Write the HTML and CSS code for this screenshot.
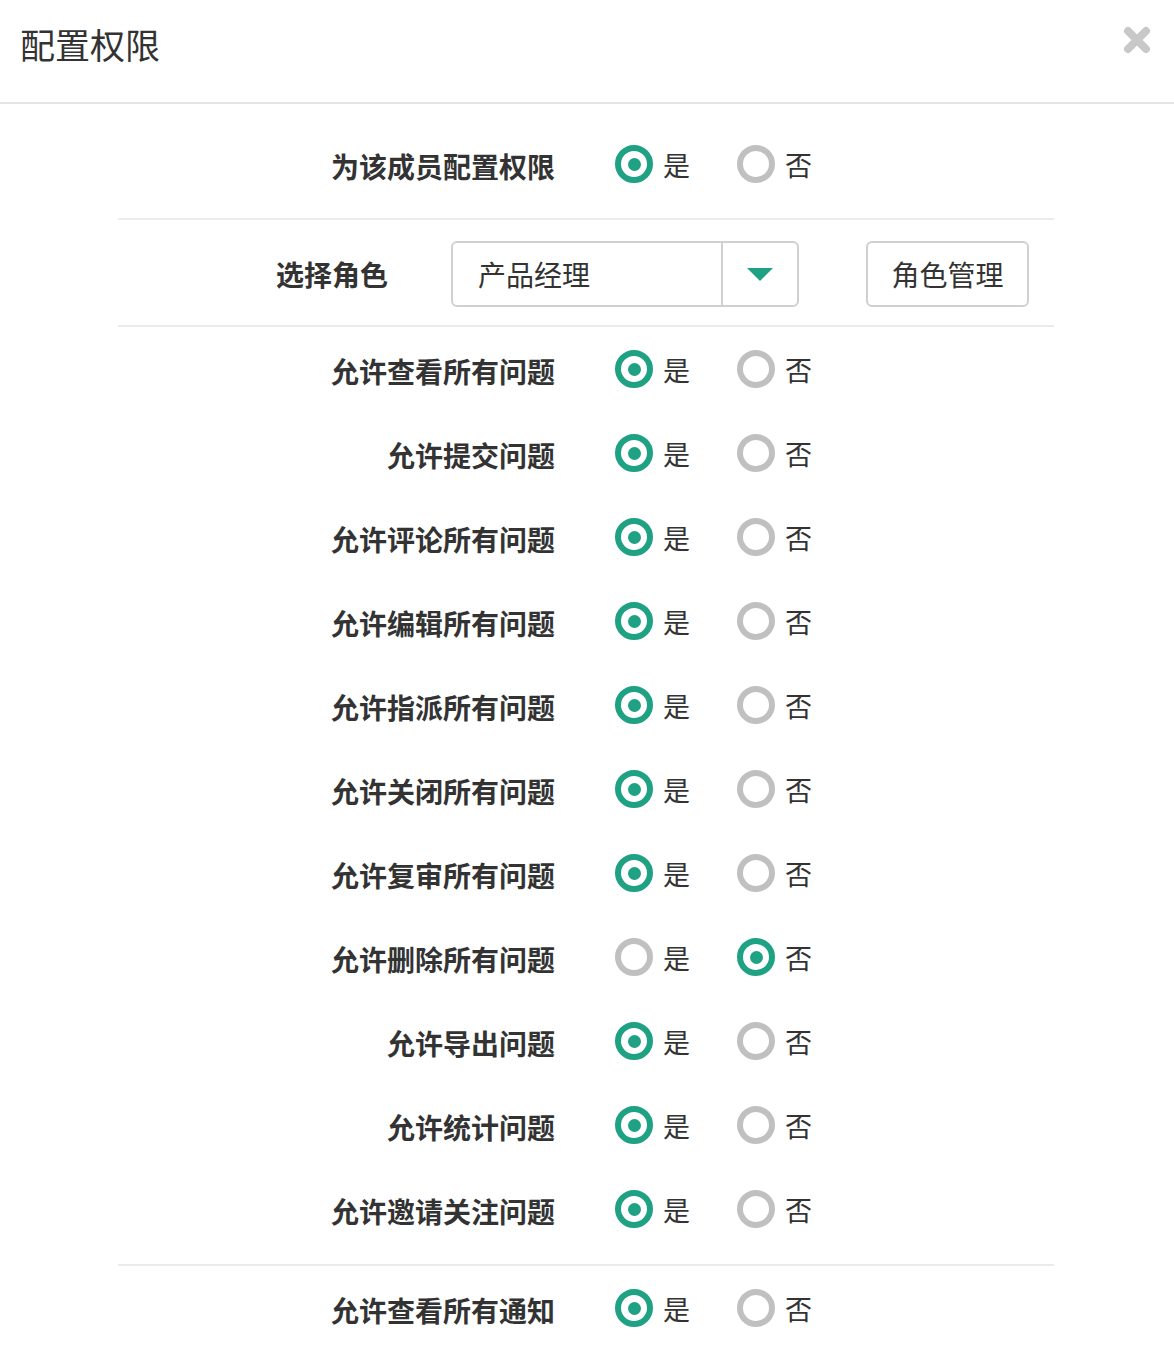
FILE: index.html
```html
<!DOCTYPE html>
<html lang="zh-CN">
<head>
<meta charset="utf-8">
<title>配置权限</title>
<link rel="stylesheet" href="styles.css">
</head>
<body>
<div class="dialog">
  <header class="dlg-header">
    <h1 class="dlg-title">配置权限</h1>
    <button class="dlg-close" aria-label="关闭">
      <svg width="30" height="30" viewBox="0 0 30 30"><path d="M6 6 L24 24 M24 6 L6 24" stroke="#c8c8c8" stroke-width="8" stroke-linecap="round"/></svg>
    </button>
  </header>
  <div class="dlg-body">
    <section class="group group-top">
      <div class="row">
        <div class="label">为该成员配置权限</div>
        <div class="radios">
          <span class="radio on"><i></i>是</span>
          <span class="radio"><i></i>否</span>
        </div>
      </div>
    </section>
    <section class="group group-role">
      <div class="role-row">
        <div class="role-label">选择角色</div>
        <div class="select">
          <span class="select-text">产品经理</span>
          <span class="select-arrow"><b></b></span>
        </div>
        <button class="btn">角色管理</button>
      </div>
    </section>
    <section class="group group-rules">
      <div class="row"><div class="label">允许查看所有问题</div><div class="radios"><span class="radio on"><i></i>是</span><span class="radio"><i></i>否</span></div></div>
      <div class="row"><div class="label">允许提交问题</div><div class="radios"><span class="radio on"><i></i>是</span><span class="radio"><i></i>否</span></div></div>
      <div class="row"><div class="label">允许评论所有问题</div><div class="radios"><span class="radio on"><i></i>是</span><span class="radio"><i></i>否</span></div></div>
      <div class="row"><div class="label">允许编辑所有问题</div><div class="radios"><span class="radio on"><i></i>是</span><span class="radio"><i></i>否</span></div></div>
      <div class="row"><div class="label">允许指派所有问题</div><div class="radios"><span class="radio on"><i></i>是</span><span class="radio"><i></i>否</span></div></div>
      <div class="row"><div class="label">允许关闭所有问题</div><div class="radios"><span class="radio on"><i></i>是</span><span class="radio"><i></i>否</span></div></div>
      <div class="row"><div class="label">允许复审所有问题</div><div class="radios"><span class="radio on"><i></i>是</span><span class="radio"><i></i>否</span></div></div>
      <div class="row"><div class="label">允许删除所有问题</div><div class="radios"><span class="radio"><i></i>是</span><span class="radio on"><i></i>否</span></div></div>
      <div class="row"><div class="label">允许导出问题</div><div class="radios"><span class="radio on"><i></i>是</span><span class="radio"><i></i>否</span></div></div>
      <div class="row"><div class="label">允许统计问题</div><div class="radios"><span class="radio on"><i></i>是</span><span class="radio"><i></i>否</span></div></div>
      <div class="row"><div class="label">允许邀请关注问题</div><div class="radios"><span class="radio on"><i></i>是</span><span class="radio"><i></i>否</span></div></div>
    </section>
    <section class="group group-last">
      <div class="row"><div class="label">允许查看所有通知</div><div class="radios"><span class="radio on"><i></i>是</span><span class="radio"><i></i>否</span></div></div>
    </section>
  </div>
</div>
</body>
</html>
```

FILE: styles.css
```css
* { box-sizing: border-box; }
html, body {
  margin: 0;
  padding: 0;
  background: #fff;
}
body {
  font-family: "Noto Sans CJK SC", "Noto Sans", "Liberation Sans", sans-serif;
  color: #333;
  width: 1174px;
}
.dlg-header {
  height: 104px;
  border-bottom: 2px solid #e5e5e5;
  display: flex;
  align-items: flex-start;
  justify-content: space-between;
  padding: 0 20px;
}
.dlg-title {
  margin: 0;
  font-size: 35px;
  font-weight: 400;
  line-height: 1;
  padding-top: 26px;
  color: #333;
}
.dlg-close {
  background: none;
  border: 0;
  padding: 0;
  margin-top: 25px;
  margin-right: 2px;
  width: 30px;
  height: 30px;
  cursor: pointer;
}
.dlg-close svg { display: block; }
.dlg-body {
  margin: 0 120px 0 118px;
}
.group { border-bottom: 2px solid #ebebeb; }
.group-top { padding: 18px 0 12px; }
.group-role { padding: 21px 0 18px; }
.group-rules { padding: 0 0 13px; }
.group-last { border-bottom: 0; }
.row {
  height: 84px;
  display: flex;
  align-items: center;
}
.label {
  width: 437px;
  text-align: right;
  font-size: 28px;
  font-weight: 700;
  color: #333;
  padding-top: 4px;
}
.radios {
  display: flex;
  margin-left: 60px;
}
.radio {
  display: flex;
  align-items: center;
  font-size: 27px;
  color: #333;
  width: 122px;
}
.radio i {
  width: 38px;
  height: 38px;
  border: 6px solid #c0c0c0;
  border-radius: 50%;
  margin-right: 10px;
  display: flex;
  align-items: center;
  justify-content: center;
}
.radio.on i { border-color: #1fa183; }
.radio.on i::after {
  content: "";
  width: 13px;
  height: 13px;
  border-radius: 50%;
  background: #1fa183;
}
.role-row {
  display: flex;
  align-items: center;
  height: 66px;
}
.role-label {
  width: 270px;
  text-align: right;
  font-size: 28px;
  font-weight: 700;
}
.select {
  margin-left: 63px;
  width: 348px;
  height: 66px;
  border: 2px solid #d0d0d0;
  border-radius: 6px;
  display: flex;
  align-items: stretch;
}
.select-text {
  flex: 1;
  display: flex;
  align-items: center;
  padding-left: 25px;
  font-size: 28px;
  color: #333;
}
.select-arrow {
  width: 76px;
  border-left: 2px solid #d0d0d0;
  display: flex;
  align-items: center;
  justify-content: center;
}
.select-arrow b {
  width: 0;
  height: 0;
  border-left: 13px solid transparent;
  border-right: 13px solid transparent;
  border-top: 13px solid #1fa183;
}
.btn {
  margin-left: 67px;
  width: 163px;
  height: 66px;
  border: 2px solid #d0d0d0;
  border-radius: 6px;
  background: #fff;
  font-family: inherit;
  font-size: 28px;
  color: #333;
  padding: 0;
}
```
